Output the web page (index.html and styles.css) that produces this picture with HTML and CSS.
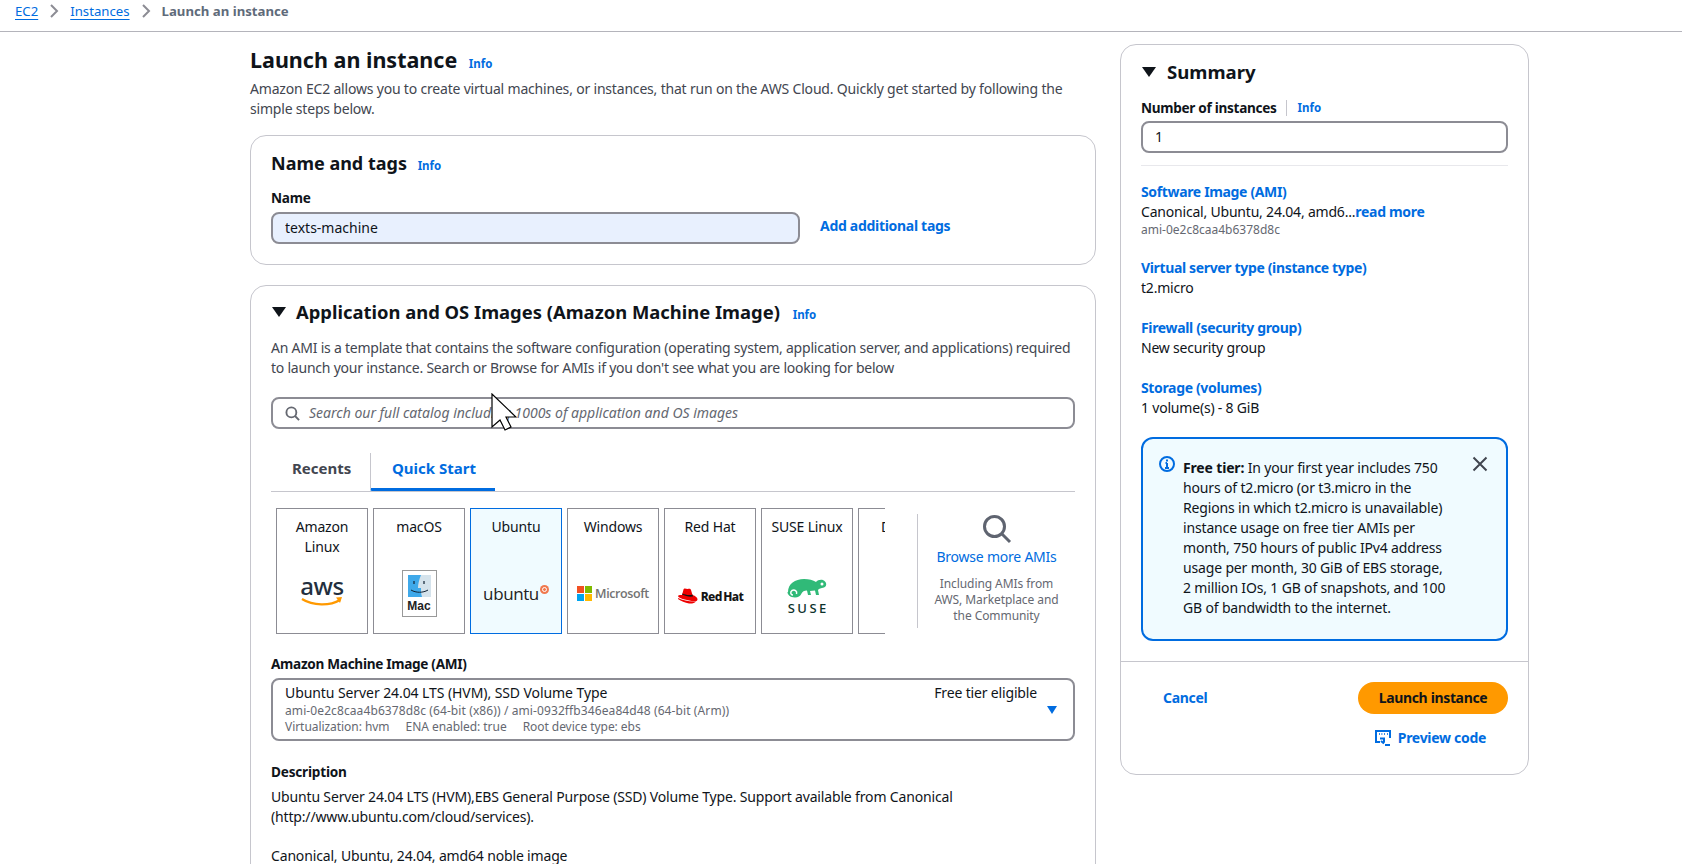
FILE: index.html
```html
<!DOCTYPE html>
<html lang="en">
<head>
  <meta charset="UTF-8">
  <meta name="viewport" content="width=device-width, initial-scale=1.0">
  <title>Launch an instance</title>
  <link rel="stylesheet" href="styles.css">
</head>
<body>
  <nav class="crumbs">
    <a href="#">EC2</a>
    <svg class="crumb-sep" viewBox="0 0 10 16"><path d="M2 2l6 6-6 6"/></svg>
    <a href="#">Instances</a>
    <svg class="crumb-sep" viewBox="0 0 10 16"><path d="M2 2l6 6-6 6"/></svg>
    <span>Launch an instance</span>
  </nav>

  <div class="layout">
    <main class="main-col">
      <h1>Launch an instance <a class="info info-h1" href="#">Info</a></h1>
      <p class="lead">Amazon EC2 allows you to create virtual machines, or instances, that run on the AWS Cloud. Quickly get started by following the simple steps below.</p>

      <section class="card name-card">
        <h2>Name and tags <a class="info" href="#">Info</a></h2>
        <label class="field-label">Name</label>
        <div class="name-row">
          <input class="text-input name-input" type="text" value="texts-machine">
          <a class="strong-link add-tags" href="#">Add additional tags</a>
        </div>
      </section>

      <section class="card ami-card">
        <h2 class="ami-title"><span class="caret"></span>Application and OS Images (Amazon Machine Image) <a class="info" href="#">Info</a></h2>
        <p class="ami-desc">An AMI is a template that contains the software configuration (operating system, application server, and applications) required to launch your instance. Search or Browse for AMIs if you don't see what you are looking for below</p>

        <div class="search">
          <svg class="search-icon" viewBox="0 0 16 16"><circle cx="6.8" cy="6.8" r="5.3"/><path d="M10.7 10.7l4.3 4.3"/></svg>
          <span>Search our full catalog including 1000s of application and OS images</span>
        </div>

        <div class="tabs">
          <span class="tab">Recents</span>
          <span class="tab tab-active">Quick Start</span>
        </div>

        <div class="os-row">
          <div class="tiles">
            <div class="tile">
              <div class="tile-name">Amazon Linux</div>
              <div class="tile-logo">
                <svg class="aws-logo" width="44" height="44" viewBox="0 -10 44 44">
                  <text x="22" y="19" class="logo-aws">aws</text>
                  <path d="M2 23c11 7 28 7 38 1" fill="none" stroke="#f90" stroke-width="2.2"/>
                  <path d="M36 21.500l6-.5-2 6z" fill="#f90"/>
                </svg>
              </div>
            </div>
            <div class="tile">
              <div class="tile-name">macOS</div>
              <div class="tile-logo">
                <div class="mac-box">
                  <svg width="23" height="22" viewBox="0 0 23 22">
                    <rect width="23" height="22" fill="#d5e3ec"/>
                    <path d="M0 0h13c-2 5-3 9-3 13h3c0 3 0 6 1 9H0z" fill="#3fa9ea"/>
                    <path d="M6 6v3M16 6v3" stroke="#123" stroke-width="1.2"/>
                    <path d="M3 15c5 3 12 3 17 0" fill="none" stroke="#123" stroke-width="1"/>
                  </svg>
                  <span>Mac</span>
                </div>
              </div>
            </div>
            <div class="tile tile-selected">
              <div class="tile-name">Ubuntu</div>
              <div class="tile-logo">
                <span class="logo-ubuntu">ubuntu</span>
                <svg class="ubuntu-mark" width="9" height="9" viewBox="0 0 9 9"><circle cx="4.500" cy="4.500" r="4.500" fill="#f0794f"/><circle cx="4.500" cy="4.500" r="2" fill="none" stroke="#fff"/></svg>
              </div>
            </div>
            <div class="tile">
              <div class="tile-name">Windows</div>
              <div class="tile-logo">
                <svg width="15" height="15" viewBox="0 0 15 15">
                  <rect width="7" height="7" fill="#f25022"/><rect x="8" width="7" height="7" fill="#7fba00"/>
                  <rect y="8" width="7" height="7" fill="#00a4ef"/><rect x="8" y="8" width="7" height="7" fill="#ffb900"/>
                </svg>
                <span class="logo-ms">Microsoft</span>
              </div>
            </div>
            <div class="tile">
              <div class="tile-name">Red Hat</div>
              <div class="tile-logo logo-low">
                <svg width="21" height="16" viewBox="0 0 21 16">
                  <path d="M5 7l1.500-5.500c.5-1.500 2-1 4-.5 2-.5 3-.5 3.500 1L15.500 7c3 1 5 2.500 5 4.500 0 2-3 2-6 1.500C9 12 1 10 1 8c0-.5 1-1 4-1z" fill="#e00"/>
                  <path d="M1 11c3 2 7 4 11 4.500 3 .3 6-.5 7-2-6 .5-13-1-18-3.500z" fill="#e00"/>
                  <path d="M5 6.500c3 1.500 7 2.500 11 2l-.5-2c-3 1-7 .5-10-1z" fill="#151515"/>
                </svg>
                <span class="logo-rh">Red Hat</span>
              </div>
            </div>
            <div class="tile">
              <div class="tile-name">SUSE Linux</div>
              <div class="tile-logo logo-stack">
                <svg width="40" height="21" viewBox="0 0 40 21">
                  <path d="M1 13C1 5 8 0 17 0c5 0 9 1 12 3 2-2.500 7-3 9-.5 2 2 1.500 5-1 6-3 1-5 .5-6 2.500l1 5h-3l-1-4.500-5 .5 1 4h-3l-1-4.500c-3 0-4.500 1-5.500 3-1 2.500-3.500 4-6.500 4-5 0-7.500-3-7.500-5.500z" fill="#30ba78"/>
                  <path d="M6 16c-2.500 0-3-3-1-4.500 2.500-1.500 5.500.5 4.500 3.500" fill="none" stroke="#fff" stroke-width="1.500"/>
                  <circle cx="35" cy="5" r="1.500" fill="#fff"/>
                </svg>
                <span class="logo-suse">SUSE</span>
              </div>
            </div>
            <div class="tile">
              <div class="tile-name">Debian</div>
            </div>
          </div>
          <div class="browse">
            <svg class="browse-icon" viewBox="0 0 30 30"><circle cx="12.500" cy="12.500" r="10"/><path d="M20 20l8 8"/></svg>
            <a href="#">Browse more AMIs</a>
            <p>Including AMIs from AWS, Marketplace and the Community</p>
          </div>
        </div>

        <label class="field-label ami-label">Amazon Machine Image (AMI)</label>
        <div class="ami-select">
          <div class="ami-text">
            <div class="ami-name">Ubuntu Server 24.04 LTS (HVM), SSD Volume Type</div>
            <div class="ami-meta">ami-0e2c8caa4b6378d8c (64-bit (x86)) / ami-0932ffb346ea84d48 (64-bit (Arm))</div>
            <div class="ami-meta ami-tags"><span>Virtualization: hvm</span><span>ENA enabled: true</span><span>Root device type: ebs</span></div>
          </div>
          <div class="ami-free">Free tier eligible</div>
          <span class="select-caret"></span>
        </div>

        <div class="field-label desc-label">Description</div>
        <p class="desc">Ubuntu Server 24.04 LTS (HVM),EBS General Purpose (SSD) Volume Type. Support available from Canonical (http://www.ubuntu.com/cloud/services).</p>
        <p class="desc">Canonical, Ubuntu, 24.04, amd64 noble image</p>
      </section>
    </main>

    <aside class="card summary">
      <div class="summary-body">
        <h2 class="summary-title"><span class="caret caret-sm"></span>Summary</h2>
        <div class="count-label"><label class="field-label">Number of instances</label><a class="info" href="#">Info</a></div>
        <input class="text-input count-input" type="text" value="1">
        <hr class="soft-rule">

        <dl class="facts">
          <dt><a href="#">Software Image (AMI)</a></dt>
          <dd>Canonical, Ubuntu, 24.04, amd6...<a class="strong-link" href="#">read more</a></dd>
          <dd class="fact-sub">ami-0e2c8caa4b6378d8c</dd>
          <dt><a href="#">Virtual server type (instance type)</a></dt>
          <dd>t2.micro</dd>
          <dt><a href="#">Firewall (security group)</a></dt>
          <dd>New security group</dd>
          <dt><a href="#">Storage (volumes)</a></dt>
          <dd>1 volume(s) - 8 GiB</dd>
        </dl>

        <div class="alert">
          <svg class="alert-icon" viewBox="0 0 16 16"><circle cx="8" cy="8" r="7"/><path d="M8 7v5M6 12h4M6.500 7H8"/><path d="M8 3.500v2"/></svg>
          <p><b>Free tier:</b> In your first year includes 750 hours of t2.micro (or t3.micro in the Regions in which t2.micro is unavailable) instance usage on free tier AMIs per month, 750 hours of public IPv4 address usage per month, 30 GiB of EBS storage, 2 million IOs, 1 GB of snapshots, and 100 GB of bandwidth to the internet.</p>
          <svg class="alert-close" viewBox="0 0 16 16"><path d="M1.500 1.500l13 13M14.500 1.500l-13 13"/></svg>
        </div>
      </div>

      <div class="summary-foot">
        <div class="foot-row">
          <a class="strong-link cancel" href="#">Cancel</a>
          <button class="launch" type="button">Launch instance</button>
        </div>
        <a class="strong-link preview" href="#">
          <svg viewBox="0 0 16 16"><path d="M5 12H1V1h14v7M10 15h5"/><path d="M4 4h.8M6.500 4h.8M9 4h.8M12 4h.8"/><path d="M5 8.500h4v4M6 11l3 2.500"/></svg>
          Preview code
        </a>
      </div>
    </aside>
  </div>

  <svg class="cursor" width="26" height="38" viewBox="0 0 26 38"><path d="M1 1v33l8-7 5 10 6-3-5-10h10z" fill="#fff" stroke="#000" stroke-width="1.200"/></svg>
</body>
</html>
```

FILE: styles.css
```css
* {
  box-sizing: border-box;
}
html, body {
  height: 864px;
  overflow: hidden;
}
body {
  margin: 0;
  position: relative;
  font-family: "Noto Sans", "Open Sans", sans-serif;
  font-size: 14px;
  line-height: 20px;
  letter-spacing: -.16px;
  color: #0f141a;
  background: #fff;
}
a {
  color: #006ce0;
  text-decoration: none;
}
h1, h2, p, dl, dd {
  margin: 0;
}

/* breadcrumbs */
.crumbs {
  height: 32px;
  padding: 1px 0 0 15px;
  display: flex;
  align-items: flex-start;
  gap: 11px;
  border-bottom: 1px solid #b4b4bb;
  color: #5f6b7a;
  font-size: 13.2px;
  font-weight: 700;
  letter-spacing: 0;
}
.crumbs a {
  font-weight: 400;
  text-decoration: underline;
  text-underline-offset: 3px;
}
.crumb-sep {
  width: 10px;
  height: 16px;
  margin-top: 2px;
  fill: none;
  stroke: #8c8c94;
  stroke-width: 2;
}

/* page columns */
.layout {
  display: grid;
  grid-template-columns: 846px 409px;
  gap: 24px;
  margin-left: 250px;
  align-items: start;
}
.main-col {
  padding-top: 13px;
}
h1 {
  font-size: 21.5px;
  line-height: 30px;
  font-weight: 700;
  letter-spacing: 0;
}
.info {
  font-size: 11.5px;
  font-weight: 700;
  letter-spacing: 0;
  margin-left: 6px;
}
.lead {
  color: #424650;
  letter-spacing: -.19px;
}
.card {
  border: 1px solid #c6c6cd;
  border-radius: 16px;
  background: #fff;
}
.name-card {
  margin-top: 16px;
  height: 130px;
  padding: 15px 20px;
}
h2 {
  font-size: 18px;
  line-height: 24px;
  font-weight: 700;
  letter-spacing: 0;
}
.field-label {
  display: block;
  font-size: 13.6px;
  font-weight: 700;
  letter-spacing: -.2px;
}
.name-card .field-label {
  margin-top: 10px;
}
.name-row {
  display: flex;
  align-items: center;
  gap: 20px;
  margin-top: 4px;
}
.text-input {
  height: 32px;
  padding: 0 12px 2px;
  border: 2px solid #8c8c94;
  border-radius: 8px;
  font: inherit;
  color: inherit;
  background: #fff;
  outline: none;
}
.name-input {
  width: 529px;
  background: #e8f0fe;
}
.strong-link {
  font-weight: 700;
  letter-spacing: -.3px;
}
.add-tags {
  margin-bottom: 5px;
}

/* AMI card */
.ami-card {
  margin-top: 20px;
  padding: 14px 20px 0;
  height: 620px;
}
.ami-title {
  font-size: 18.4px;
  display: flex;
  align-items: center;
  white-space: pre;
}
.ami-title .info {
  margin-left: 8px;
  margin-top: 5px;
  line-height: 16px;
}
.caret {
  width: 0;
  height: 0;
  margin: 0 10px 0 1px;
  border-left: 7px solid transparent;
  border-right: 7px solid transparent;
  border-top: 10px solid #0f141a;
}
.ami-desc {
  margin-top: 14px;
  color: #424650;
  letter-spacing: -.23px;
}
.search {
  display: flex;
  align-items: center;
  gap: 9px;
  height: 32px;
  margin-top: 19px;
  padding: 0 12px;
  border: 2px solid #8c8c94;
  border-radius: 8px;
  font-style: italic;
  letter-spacing: 0;
  color: #656871;
}
.search-icon {
  width: 15px;
  height: 15px;
  fill: none;
  stroke: #656871;
  stroke-width: 2;
}
.tabs {
  display: flex;
  height: 63px;
  padding-top: 24px;
  border-bottom: 1px solid #c6c6cd;
  font-size: 15px;
  font-weight: 700;
  letter-spacing: 0;
  color: #424650;
}
.tab {
  width: 99px;
  height: 38px;
  padding: 5px 0 0 21px;
}
.tab-active {
  width: 125px;
  padding-left: 21px;
  color: #006ce0;
  border-left: 1px solid #c6c6cd;
  border-bottom: 3px solid #006ce0;
  border-bottom-left-radius: 2px;
}
.os-row {
  display: flex;
  margin-top: 16px;
  padding-left: 5px;
}
.tiles {
  display: flex;
  gap: 5px;
  width: 609px;
  overflow: hidden;
  flex-shrink: 0;
}
.tile {
  flex: 0 0 92px;
  height: 126px;
  padding: 8px 8px 0;
  border: 1px solid #8c8c94;
  text-align: center;
  display: flex;
  flex-direction: column;
}
.tile-selected {
  border-color: #006ce0;
  background: #f0fbff;
}
.tile-name {
  height: 40px;
}
.tile-logo {
  flex: 1;
  display: flex;
  align-items: center;
  justify-content: center;
  gap: 3px;
  padding-bottom: 4px;
}
.logo-low {
  padding: 2px 0 0;
}
.aws-logo {
  margin-top: -10px;
}
.logo-aws {
  font: 500 24px "Noto Sans", sans-serif;
  fill: #232f3e;
  text-anchor: middle;
  letter-spacing: -.5px;
}
.mac-box {
  width: 35px;
  height: 47px;
  border: 1px solid #999;
  display: flex;
  flex-direction: column;
  align-items: center;
  padding-top: 4px;
  font: 700 12px/18px "Liberation Sans", sans-serif;
  letter-spacing: 0;
  color: #222;
}
.logo-ubuntu {
  font: 500 17px "Open Sans", sans-serif;
  color: #222;
  letter-spacing: -.4px;
}
.ubuntu-mark {
  align-self: center;
  margin: -8px 0 0 -2px;
}
.logo-ms {
  font: 600 12.5px "Open Sans", sans-serif;
  color: #737373;
  letter-spacing: -.4px;
}
.logo-rh {
  font: 800 12px "Noto Sans", sans-serif;
  color: #151515;
  letter-spacing: -.6px;
  word-spacing: -1px;
}
.logo-stack {
  flex-direction: column;
  gap: 1px;
  padding: 4px 0 0;
}
.logo-suse {
  font: 500 13px/14px "Noto Sans", sans-serif;
  letter-spacing: 2.500px;
  margin-right: -2.500px;
  color: #0c322c;
}
.browse {
  margin: 6px 0 0 32px;
  height: 114px;
  width: 158px;
  border-left: 1px solid #c6c6cd;
  text-align: center;
  display: flex;
  flex-direction: column;
  align-items: center;
  font-size: 12px;
  line-height: 16px;
  letter-spacing: -.08px;
  color: #656871;
}
.browse a {
  font-size: 14px;
  line-height: 20px;
  letter-spacing: -.22px;
  margin-top: 3px;
}
.browse p {
  margin-top: 9px;
  width: 130px;
}
.browse-icon {
  width: 30px;
  height: 30px;
  fill: none;
  stroke: #5f6470;
  stroke-width: 3;
}
.ami-label {
  margin-top: 20px;
  letter-spacing: -.3px;
}
.ami-select {
  position: relative;
  display: flex;
  justify-content: space-between;
  height: 63px;
  margin-top: 4px;
  padding: 3px 36px 0 12px;
  border: 2px solid #8c8c94;
  border-radius: 8px;
}
.ami-name {
  letter-spacing: -.08px;
}
.ami-meta {
  font-size: 12px;
  line-height: 16px;
  letter-spacing: .1px;
  color: #656871;
}
.ami-tags {
  letter-spacing: -.05px;
}
.ami-tags span {
  margin-right: 16px;
}
.select-caret {
  position: absolute;
  right: 16px;
  top: 26px;
  width: 0;
  height: 0;
  border-left: 5.500px solid transparent;
  border-right: 5.500px solid transparent;
  border-top: 8px solid #006ce0;
}
.desc-label {
  margin-top: 21px;
}
.desc {
  margin-top: 5px;
  margin-bottom: 19px;
}

/* summary panel */
.summary {
  margin-top: 12px;
  height: 731px;
  display: flex;
  flex-direction: column;
}
.summary-body {
  padding: 15px 20px 0;
}
.summary-title {
  font-size: 18.6px;
  display: flex;
  align-items: center;
}
.caret-sm {
  margin: 0 11px 0 1px;
}
.count-label {
  display: flex;
  align-items: center;
  margin-top: 14px;
}
.count-label .field-label {
  padding-right: 9px;
  border-right: 1px solid #c6c6cd;
  line-height: 16px;
  letter-spacing: -.3px;
}
.count-label .info {
  margin-left: 11px;
}
.count-input {
  width: 100%;
  margin-top: 3px;
}
.soft-rule {
  margin: 12px 0 0;
  border: 0;
  border-top: 1px solid #e8e8ec;
}
.facts {
  margin-top: 16px;
}
.facts dd {
  letter-spacing: -.2px;
}
.facts dt {
  font-weight: 700;
  letter-spacing: -.35px;
  margin-top: 20px;
  line-height: 20px;
}
.facts dt:first-child {
  margin-top: 0;
}
.facts .fact-sub {
  font-size: 12px;
  line-height: 16px;
  letter-spacing: 0;
  color: #656871;
}
.alert {
  display: flex;
  align-items: flex-start;
  height: 204px;
  margin-top: 19px;
  padding: 17px 18px 0 16px;
  border: 2px solid #006ce0;
  border-radius: 12px;
  background: #f0fbff;
}
.alert-icon {
  flex: none;
  width: 16px;
  height: 16px;
  fill: none;
  stroke: #006ce0;
  stroke-width: 2;
}
.alert p {
  flex: 1;
  margin: 2px 0 0 8px;
  padding-right: 24px;
}
.alert-close {
  flex: none;
  width: 16px;
  height: 16px;
  fill: none;
  stroke: #424650;
  stroke-width: 2;
}
.summary-foot {
  margin-top: 20px;
  padding: 20px 20px 0;
  border-top: 1px solid #c6c6cd;
  display: flex;
  flex-direction: column;
  align-items: flex-end;
}
.foot-row {
  width: 100%;
  display: flex;
  align-items: center;
  justify-content: space-between;
}
.cancel {
  margin-left: 22px;
}
.launch {
  width: 150px;
  height: 32px;
  border: 0;
  border-radius: 16px;
  background: #ff9900;
  color: #0f141a;
  font: inherit;
  font-weight: 700;
  letter-spacing: -.35px;
}
.preview {
  display: flex;
  align-items: center;
  gap: 7px;
  margin: 14px 22px 0 0;
}
.preview svg {
  width: 16px;
  height: 16px;
  fill: none;
  stroke: #006ce0;
  stroke-width: 2;
}

/* mouse pointer in the capture */
.cursor {
  position: absolute;
  left: 491px;
  top: 393px;
}
```
